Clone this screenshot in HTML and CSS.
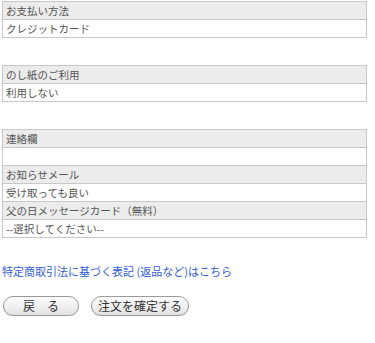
FILE: index.html
```html
<!DOCTYPE html>
<html lang="ja">
<head>
  <meta charset="UTF-8" />
  <meta name="viewport" content="width=device-width, initial-scale=1.0"/>
  <title>ご注文内容の確認</title>
  <link rel="stylesheet" href="styles.css">
</head>
<body>

  <div class="contenido">

    <!-- お支払い方法 -->
    <table class="tabla">
      <tr><th>お支払い方法</th></tr>
      <tr><td>クレジットカード</td></tr>
    </table>

    <!-- のし紙 -->
    <table class="tabla">
      <tr><th>のし紙のご利用</th></tr>
      <tr><td>利用しない</td></tr>
    </table>

    <!-- 連絡欄 -->
    <table class="tabla">
      <tr><th>連絡欄</th></tr>
      <tr><td></td></tr>
      <tr><th>お知らせメール</th></tr>
      <tr><td>受け取っても良い</td></tr>
      <tr><th>父の日メッセージカード（無料）</th></tr>
      <tr><td>--選択してください--</td></tr>
    </table>

    <p class="enlace"><a href="#">特定商取引法に基づく表記 (返品など)はこちら</a></p>

    <div class="botones">
      <button class="boton boton-volver">戻　る</button>
      <button class="boton boton-confirmar">注文を確定する</button>
    </div>

  </div>

</body>
</html>
```

FILE: styles.css
```css
body {
  font-family: "Noto Sans CJK JP", "DejaVu Sans", sans-serif;
  background: white;
  margin: 0;
  padding: 0;
  color: #555;
}

.contenido {
  padding: 1px 0 0 2px;
}

.tabla {
  width: 365px;
  border-collapse: collapse;
  margin-bottom: 27px;
}

.tabla th,
.tabla td {
  border: 1px solid #c8c8c8;
  height: 17px;
  padding: 0 3px;
  font-size: 10.5px;
  line-height: 17px;
  font-weight: normal;
  text-align: left;
  color: #555;
}

.tabla th {
  background-color: #ececec;
}

.tabla td {
  background-color: white;
}

.enlace {
  margin: -2px 0 0 0;
  font-size: 11px;
  line-height: 16px;
}

.enlace a {
  color: #3360d6;
  text-decoration: none;
}

.botones {
  display: flex;
  gap: 12px;
  margin-top: 17px;
  padding-left: 1px;
}

.boton {
  height: 20px;
  border: 1px solid #9a9a9a;
  border-radius: 10px;
  background: linear-gradient(#ffffff, #e2e2e2);
  color: #333;
  font-family: "Noto Sans CJK JP", sans-serif;
  font-size: 12px;
  line-height: 18px;
  padding: 0;
  cursor: pointer;
  box-shadow: 0 1px 1px rgba(0, 0, 0, 0.15);
}

.boton-volver {
  width: 76px;
}

.boton-confirmar {
  width: 98px;
}
```
